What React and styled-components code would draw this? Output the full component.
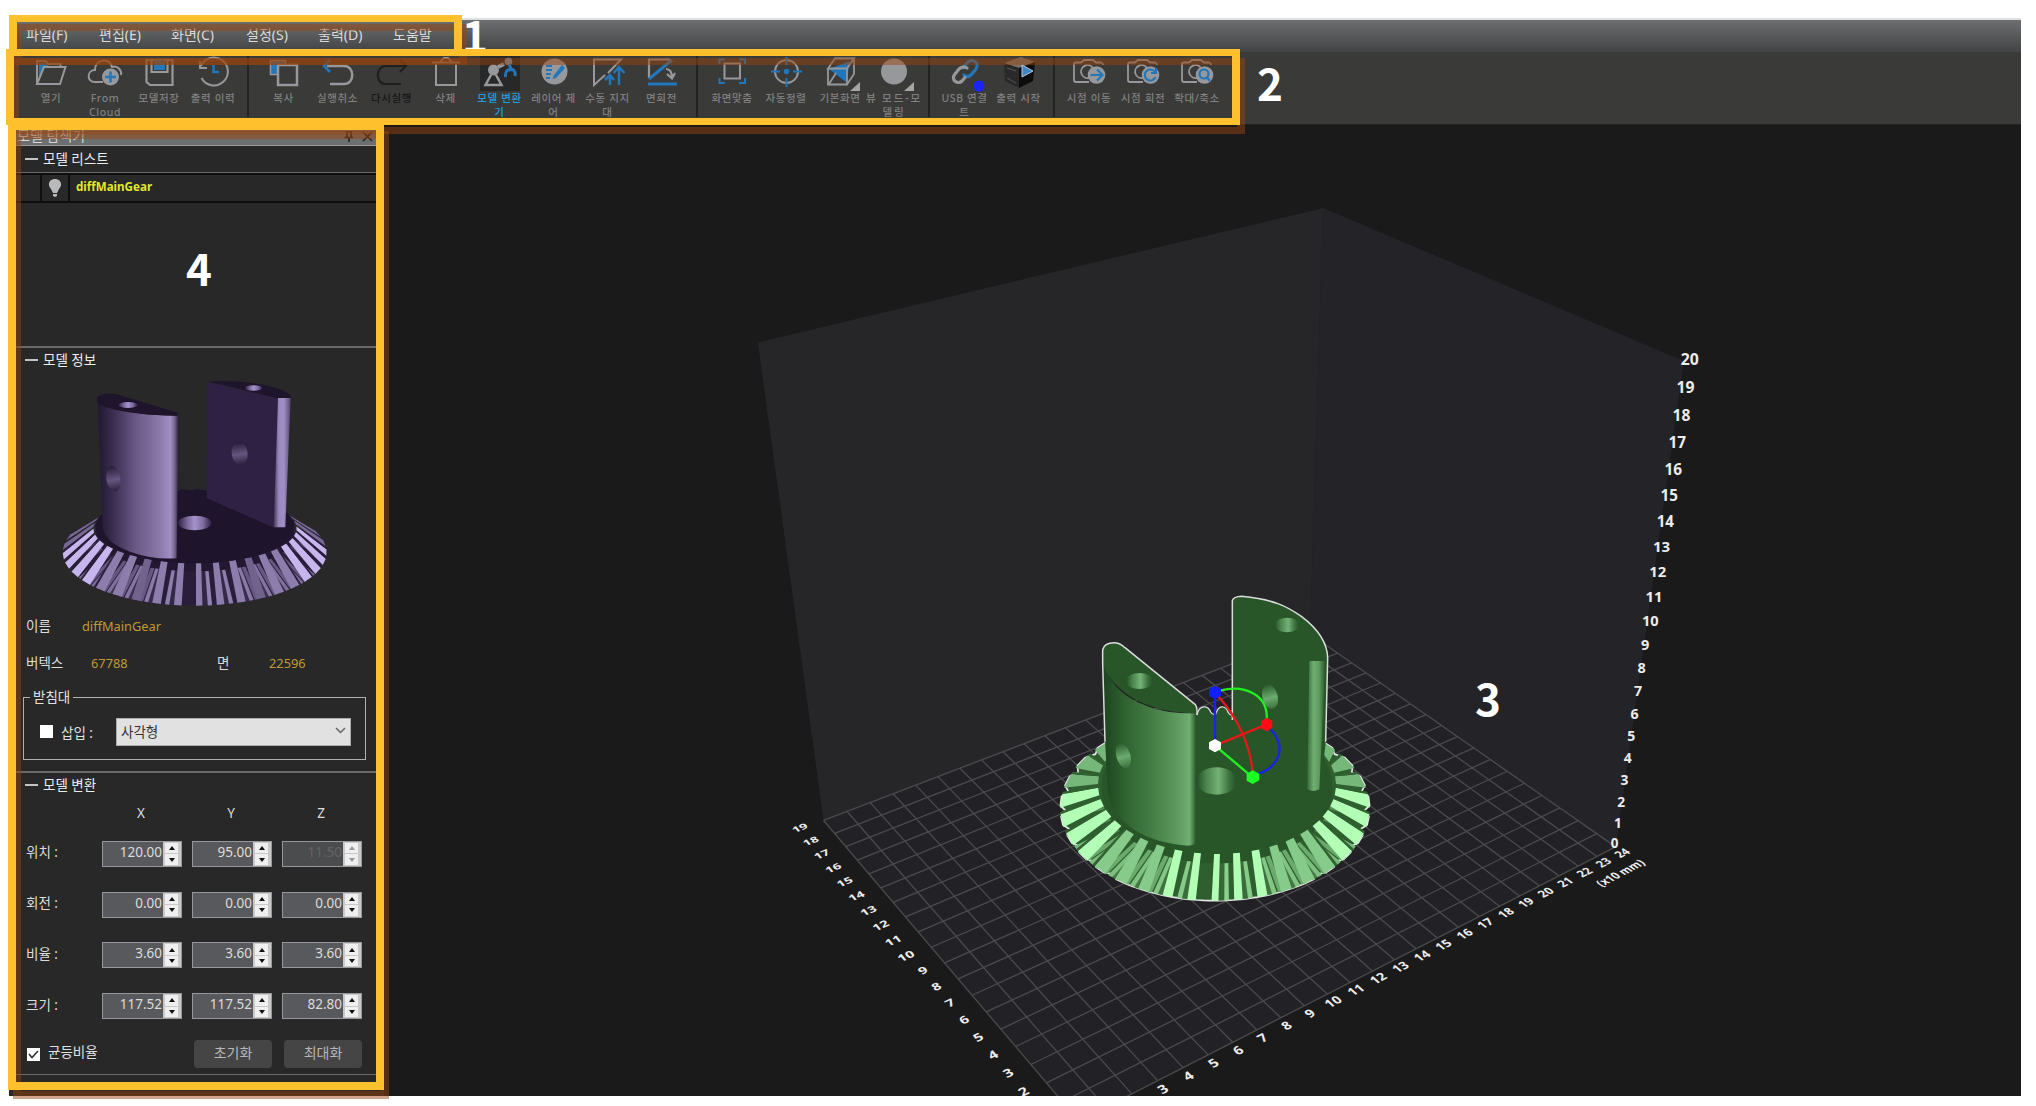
import React from "react";
import styled, { createGlobalStyle } from "styled-components";

const FONT = `"Noto Sans", "Noto Sans CJK KR", sans-serif`;
const BLUE = "#2277bb";
const GRAY = "#97989b";

const GlobalStyle = createGlobalStyle`
  *, *::before, *::after { box-sizing: border-box; }
  body { margin: 0; background: #fff; font-family: ${FONT}; }
`;

/* ---------- page shell ---------- */
const Page = styled.div`
  position: relative;
  width: 2036px;
  height: 1106px;
  padding: 18px 15px 10px 9px;
  background: #fff;
  overflow: hidden;
`;
const Window = styled.div`
  display: flex;
  flex-direction: column;
  height: 1078px;
  background: #1a1a1a;
`;
const MenuBar = styled.nav`
  display: flex;
  align-items: center;
  height: 34px;
  padding: 0 0 2px 17px;
  border-top: 2px solid #dfe0df;
  background: linear-gradient(#6c6e6f, #424344);
`;
const MenuItem = styled.span`
  width: ${(p) => p.$w}px;
  font-size: 14px;
  line-height: 16px;
  color: #dcdcdc;
  white-space: nowrap;
`;
const Toolbar = styled.div`
  display: flex;
  height: 73px;
  padding: 4px 0 0 15px;
  border-bottom: 1px solid #222;
  background: #3a3a39;
`;
const Separator = styled.div`
  width: 16.5px;
  flex: none;
  display: flex;
  justify-content: center;
  &::before {
    content: "";
    width: 2px;
    height: 61px;
    background: #232323;
  }
`;
const Tool = styled.div`
  width: 54px;
  flex: none;
  display: flex;
  flex-direction: column;
  align-items: center;
`;
const ToolIcon = styled.svg`
  width: 40px;
  height: 35px;
  overflow: visible;
  background: ${(p) => (p.$active ? "#282828" : "none")};
`;
const ToolLabel = styled.div`
  width: 66px;
  margin-top: 1px;
  font-size: 10.5px;
  font-weight: 500;
  line-height: 13.6px;
  letter-spacing: ${(p) => p.$spacing ?? 0.6}px;
  text-align: center;
  white-space: pre;
  color: ${(p) => p.$color || "#808080"};
`;

/* ---------- sidebar ---------- */
const Body = styled.div`
  display: flex;
  flex: 1;
  min-height: 0;
`;
const Sidebar = styled.aside`
  width: 375px;
  flex: none;
  display: flex;
  flex-direction: column;
  padding: 0 8px 0 7px;
  background: #282828;
`;
const PanelTitle = styled.div`
  display: flex;
  align-items: center;
  height: 21px;
  padding: 1px 1px 0 1px;
  border-bottom: 1px solid #999;
  background: #6d6e6f;
  font-size: 14px;
  line-height: 18px;
  color: #d4d4d4;
  span { flex: 1; }
`;
const Section = styled.section`
  height: ${(p) => p.$h}px;
  border-bottom: ${(p) => p.$line || 2}px solid #6a6a6a;
`;
const SectionTitle = styled.h2`
  display: flex;
  align-items: center;
  gap: 5px;
  height: ${(p) => p.$h}px;
  margin: 0;
  padding: 0 0 ${(p) => p.$lift}px 9px;
  font-size: 13.5px;
  font-weight: 400;
  color: #ececec;
  &::before {
    content: "";
    width: 13px;
    height: 2px;
    margin-top: 2px;
    background: #c4c4c4;
  }
`;
const ListRow = styled.div`
  display: grid;
  grid-template-columns: 24px 26px 1fr;
  gap: 2px;
  height: 31px;
  padding: 2px 0;
  border-top: 1px solid #6a6a6a;
  background: #0e0e0e;
`;
const ListCell = styled.div`
  display: flex;
  align-items: center;
  justify-content: ${(p) => (p.$name ? "flex-start" : "center")};
  padding: ${(p) => (p.$name ? "0 0 3px 6px" : 0)};
  background: #282828;
  color: #e2e62a;
  font-size: 11.6px;
  font-weight: 700;
`;
const Preview = styled.svg`
  display: block;
  width: 360px;
  height: 234px;
  margin-bottom: -1px;
`;
const InfoRow = styled.div`
  display: flex;
  align-items: center;
  height: 37px;
  padding-left: 10px;
  font-size: 13.5px;
  color: #ddd;
`;
const InfoLabel = styled.span`
  width: ${(p) => p.$w}px;
`;
const InfoValue = styled.span`
  width: ${(p) => p.$w}px;
  padding-top: 2px;
  color: #c09a35;
  font-size: 12.8px;
`;
const Group = styled.fieldset`
  display: flex;
  align-items: center;
  width: 343px;
  height: 73px;
  margin: 7px 0 0 7px;
  padding: 0 0 3px 16px;
  border: 1.5px solid #b0b0b0;
  font-size: 13.5px;
  color: #e0e0e0;
  legend {
    margin-left: -10px;
    padding: 0 3px;
    line-height: 20px;
  }
`;
const CheckBox = styled.span`
  display: flex;
  align-items: center;
  justify-content: center;
  width: 13px;
  height: 13px;
  margin-right: 8px;
  background: #fff;
`;
const Select = styled.div`
  display: flex;
  align-items: center;
  justify-content: space-between;
  width: 235px;
  height: 28px;
  margin-left: 23px;
  padding: 0 4px 2px 4px;
  border: 1px solid #acacac;
  background: #e1e1e1;
  color: #333;
`;
const AxisGrid = styled.div`
  display: grid;
  grid-template-columns: 66px 80px 80px 80px;
  column-gap: 10px;
  padding-left: 10px;
  row-gap: 24.8px;
  align-items: center;
  color: #ddd;
  font-size: 13.5px;
`;
const AxisHead = styled.div`
  height: 19px;
  margin: 0 1px -7px -1px;
  line-height: 19px;
  text-align: center;
`;
const RowLabel = styled.div`
  padding-bottom: 5px;
  white-space: nowrap;
`;
const Spin = styled.div`
  display: flex;
  height: 26px;
  border: 1px solid #96989c;
  background: ${(p) => (p.$off ? "#4b4c4e" : "#58595c")};
`;
const SpinValue = styled.span`
  flex: 1;
  text-align: right;
  line-height: 21px;
  padding-right: 1px;
  color: ${(p) => (p.$off ? "#626365" : "#dcdcdc")};
`;
const SpinButtons = styled.span`
  display: flex;
  flex-direction: column;
  gap: 1px;
  width: 18px;
  padding: 1px 3px 1px 2px;
  background: #c9c9c9;
`;
const SpinButton = styled.span`
  flex: 1;
  display: flex;
  align-items: center;
  justify-content: center;
  background: #efefef;
`;
const Footer = styled.div`
  display: flex;
  align-items: center;
  height: 28px;
  margin-top: 21px;
  padding-left: 11px;
  color: #e0e0e0;
  font-size: 13.5px;
`;
const FooterText = styled.span`
  width: 146px;
  padding-bottom: 7px;
`;
const Button = styled.div`
  width: 78px;
  height: 28px;
  margin-right: 12px;
  border-radius: 4px;
  background: #454545;
  color: #b8b8b8;
  font-size: 14px;
  line-height: 25px;
  text-align: center;
`;

/* ---------- annotations ---------- */
const Frame = styled.div`
  position: absolute;
  left: ${(p) => p.$x}px;
  top: ${(p) => p.$y}px;
  width: ${(p) => p.$w}px;
  height: ${(p) => p.$h}px;
  &::before,
  &::after {
    content: "";
    position: absolute;
    inset: 0;
    border-style: solid;
    border-width: ${(p) => p.$edge || 7}px 8px;
  }
  &::before {
    inset: 9px -5px -9px 5px;
    border-color: rgba(155, 68, 13, 0.48);
  }
  &::after {
    border-color: #ffc02e;
  }
`;
const Marker = styled.div`
  position: absolute;
  left: ${(p) => p.$x}px;
  top: ${(p) => p.$y}px;
  font-family: "Noto Sans CJK KR", sans-serif;
  font-size: 44px;
  font-weight: 700;
  line-height: 44px;
  color: #fff;
`;
const Viewport = styled.svg`
  flex: 1;
  min-width: 0;
  height: 971px;
  display: block;
  background: #1a1a1a;
`;

/* ---------- camera ---------- */
function solveLinear(a, b) {
  const n = b.length;
  const m = a.map((row, i) => [...row, b[i]]);
  for (let c = 0; c < n; c++) {
    let p = c;
    for (let r = c + 1; r < n; r++) if (Math.abs(m[r][c]) > Math.abs(m[p][c])) p = r;
    [m[c], m[p]] = [m[p], m[c]];
    for (let r = 0; r < n; r++) {
      if (r === c) continue;
      const f = m[r][c] / m[c][c];
      for (let k = c; k <= n; k++) m[r][k] -= f * m[c][k];
    }
  }
  return m.map((row, i) => row[n] / row[i]);
}

// Build volume in cm, and where each of its corners lands on screen.
const WIDTH = 24;
const DEPTH = 19;
const HEIGHT = 20;
const CORNERS = [
  [0, 0, 0, 1078.2, 1120.7],
  [WIDTH, 0, 0, 1616.6, 846.7],
  [WIDTH, DEPTH, 0, 1309.2, 633.8],
  [0, DEPTH, 0, 824.3, 821],
  [0, DEPTH, HEIGHT, 757.6, 342],
  [WIDTH, DEPTH, HEIGHT, 1323.7, 208],
  [WIDTH, 0, HEIGHT, 1683.3, 361.4],
];

function makeCamera(corners) {
  const rows = [];
  const rhs = [];
  corners.forEach(([X, Y, Z, U, V]) => {
    const [x, y, z, u, v] = [X / 24, Y / 24, Z / 24, U / 1000, V / 1000];
    rows.push([x, y, z, 1, 0, 0, 0, 0, -u * x, -u * y, -u * z]);
    rhs.push(u);
    rows.push([0, 0, 0, 0, x, y, z, 1, -v * x, -v * y, -v * z]);
    rhs.push(v);
  });
  const n = 11;
  const ata = Array.from({ length: n }, (_, i) =>
    Array.from({ length: n }, (_, j) => rows.reduce((s, r) => s + r[i] * r[j], 0))
  );
  const atb = Array.from({ length: n }, (_, i) => rows.reduce((s, r, k) => s + r[i] * rhs[k], 0));
  const p = solveLinear(ata, atb);
  return (X, Y, Z = 0) => {
    const [x, y, z] = [X / 24, Y / 24, Z / 24];
    const w = p[8] * x + p[9] * y + p[10] * z + 1;
    return [
      ((p[0] * x + p[1] * y + p[2] * z + p[3]) / w) * 1000,
      ((p[4] * x + p[5] * y + p[6] * z + p[7]) / w) * 1000,
    ];
  };
}
const project = makeCamera(CORNERS);
const pts = (...list) => list.map((q) => q.map((v) => v.toFixed(2)).join(",")).join(" ");
const range = (a, b) => Array.from({ length: b - a + 1 }, (_, i) => a + i);

function FloorText({ x, y, children, size = 5.2 }) {
  const o = project(x, y);
  const ex = project(x + 0.5, y);
  const ey = project(x, y + 0.5);
  const m = [
    (ex[0] - o[0]) / 5,
    (ex[1] - o[1]) / 5,
    -(ey[0] - o[0]) / 5,
    -(ey[1] - o[1]) / 5,
    o[0],
    o[1],
  ];
  return (
    <text transform={`matrix(${m.join(" ")})`} fontSize={size} textAnchor="middle" y={size * 0.36}>
      {children}
    </text>
  );
}

/* ---------- gear ---------- */
const D = Math.PI / 180;
// Angles are measured from the point of the rim nearest to the viewer.
const onEllipse = (e, deg) => [e.x + e.a * Math.sin(deg * D), e.y + e.b * Math.cos(deg * D)];

const mix = (a, b, t) =>
  `rgb(${a.map((v, i) => Math.round(v + (b[i] - v) * Math.max(0, Math.min(1, t)))).join(",")})`;

function GearRing({ outer, inner, root, step, outerStep, bend, shift, span, c, outline }) {
  const ain = (k) => k * step + shift;
  const aout = (k) => k * outerStep + Math.sign(k) * bend * k * k + shift;
  const ks = range(-span, span).sort((p, q) => Math.abs(q) - Math.abs(p));
  const rim = [];
  for (let k = -span; k <= span; k += 0.5) {
    const tip = Number.isInteger(k);
    const e = tip || Math.abs(k) < 4 ? outer : { ...outer, a: outer.a * 0.965, b: outer.b * 0.97 };
    if (tip) rim.push(onEllipse(e, aout(k - 0.22)), onEllipse(e, aout(k + 0.22)));
    else rim.push(onEllipse(e, aout(k)));
  }
  return (
    <g>
      <polygon points={pts(...rim)} fill={mix(c.dark, c.mid, 0.12)} stroke={outline || "none"} strokeWidth="5" strokeLinejoin="round" />
      <ellipse cx={root.x} cy={root.y} rx={root.a} ry={root.b} fill={mix(c.dark, c.dark, 0)} />
      {ks.map((k) => {
        const n = Math.abs(k);
        const side = Math.min(1, n / 7);
        const s = Math.sign(k) || 1;
        const w = 0.15 + side * 0.19;
        const glow = Math.abs(n - 4) < 1.4 ? 0.45 : 1;
        const back = n > 9 ? 0.25 : 1;
        const wedge = (lo, hi, from, fill, key) => (
          <polygon
            key={key}
            fill={fill}
            points={pts(
              onEllipse(from, ain(k + lo)),
              onEllipse(from, ain(k + hi)),
              onEllipse(outer, aout(k + hi)),
              onEllipse(outer, aout(k + lo))
            )}
          />
        );
        return (
          <g key={k}>
            {n < 9 && wedge(s * 0.14, s * 0.42, root, mix(c.dark, c.mid, 0.25 + side * 0.45), "f")}
            {n < 7 && wedge(s * 0.4, s * 0.6, root, mix(c.mid, c.light, 0.5 - side * 0.3), "v")}
            {n > 2 && n < 7 && wedge(-s * 0.34, -s * 0.1, root, mix(c.mid, c.light, 0.1), "g")}
            {wedge(-w, w, inner, mix(c.mid, c.light, glow * back * (c.flat && n < 4 ? 0.45 : 1)), "c")}
            {n > 4 && wedge(s * w, s * (w + 0.12), inner, mix(c.dark, c.mid, 0.15), "d")}
          </g>
        );
      })}
    </g>
  );
}

function Shade({ id, stops, vertical }) {
  return (
    <linearGradient id={id} x2={vertical ? 0 : 1} y2={vertical ? 1 : 0}>
      {stops.map(([o, col]) => (
        <stop key={o} offset={o} stopColor={col} />
      ))}
    </linearGradient>
  );
}

function GreenGear() {
  const base = "#285628";
  return (
    <g transform="translate(1040 580) scale(0.33333)">
      <defs>
        <Shade id="gFace" stops={[[0, "#1d441e"], [0.2, "#2c5f2d"], [0.6, "#4a854a"], [0.85, "#65a166"], [0.93, "#70ae71"], [0.98, "#3d733e"], [1, "#24502a"]]} />
        <Shade id="gHole" stops={[[0, "#24502a"], [0.25, "#4c874d"], [0.55, "#74b276"], [0.8, "#3f7540"], [1, "#24502a"]]} />
        <Shade id="gCol" stops={[[0, "#386c39"], [0.35, "#70ad71"], [0.65, "#5f9c60"], [1, "#285628"]]} />
        <Shade id="gSide" vertical stops={[[0, "#2b5c2c"], [0.55, "#6cab6e"], [1, "#3c713d"]]} />
      </defs>
      <GearRing
        outer={{ x: 525, y: 684, a: 464, b: 278 }}
        inner={{ x: 531, y: 615, a: 357, b: 207 }}
        root={{ x: 531, y: 640, a: 345, b: 210 }}
        step={9.4}
        outerStep={8.5}
        bend={0.22}
        shift={0}
        span={12}
        outline="#e8e8e8"
        c={{ dark: [40, 86, 40], mid: [98, 160, 100], light: [178, 255, 182] }}
      />
      <ellipse cx="531" cy="612" rx="345" ry="204" fill={base} />
      <path d="M470 600 V405 C476 372 506 372 514 398 L527 402 C536 370 556 372 565 404 L577 400 V600Z" fill={base} />
      <path d="M471 405 C477 374 504 374 512 396 Q518 406 527 402 C536 374 556 374 565 398 Q571 408 576 402" fill="none" stroke="#d8d8d8" strokeWidth="4" />
      <path d="M577 62 Q580 50 605 49 C700 58 740 78 785 110 Q862 168 863 235 L857 490 L840 632 H802 L577 520Z" fill={base} />
      <path d="M577 420 V62 Q580 50 605 49 C700 58 740 78 785 110 Q862 168 863 235 L857 485" fill="none" stroke="#dcdcdc" strokeWidth="4.5" />
      <path d="M808 243 H856 L838 628 Q820 638 802 628Z" fill="url(#gCol)" />
      <ellipse cx="741" cy="135" rx="37" ry="22" fill="url(#gHole)" />
      <ellipse cx="690" cy="350" rx="23" ry="37" transform="rotate(-14 690 350)" fill="url(#gSide)" />
      <ellipse cx="530" cy="603" rx="60" ry="41" fill="url(#gHole)" />
      <path d="M190 250 Q215 330 290 365 Q360 398 430 400 H468 V790 Q455 800 430 796 Q330 785 270 740 Q205 690 203 620 L195 480Z" fill="url(#gFace)" />
      <path d="M188 250 V210 Q192 188 222 188 Q240 188 255 203 L466 374 Q472 382 467 399 H440 Q340 392 272 350 Q205 305 188 250Z" fill={base} />
      <path d="M195 485 L188 250 V210 Q192 188 222 188 Q240 188 255 203 L466 374 Q472 380 471 405" fill="none" stroke="#dcdcdc" strokeWidth="4.5" />
      <ellipse cx="298" cy="303" rx="40" ry="24" fill="url(#gHole)" />
      <ellipse cx="250" cy="527" rx="21" ry="38" transform="rotate(-16 250 527)" fill="url(#gSide)" />
      <g fill="none" strokeWidth="7">
        <path d="M540 332 C615 312 686 345 680 420" stroke="#22ee22" />
        <path d="M536 350 C595 415 632 500 638 580" stroke="#e81818" />
        <path d="M692 448 C740 500 720 560 652 582" stroke="#1822e8" />
        <path d="M525 345 V490" stroke="#1822ff" />
        <path d="M525 497 L680 433" stroke="#e81818" />
        <path d="M525 497 L638 592" stroke="#22ee22" />
      </g>
      <polygon points="525,317 543,327 543,347 525,357 507,347 507,327" fill="#0f1fff" />
      <polygon points="525,477 543,487 543,507 525,517 507,507 507,487" fill="#fff" />
      <polygon points="680,413 697,423 697,443 680,454 663,445 663,424" fill="#ff0d17" />
      <polygon points="638,571 658,581 658,601 638,612 620,602 620,581" fill="#1cff24" />
    </g>
  );
}

function PurpleGear() {
  const base = "#1e142b";
  return (
    <g transform="translate(0 340) scale(0.33333)">
      <defs>
        <Shade id="pFace" stops={[[0, "#21172f"], [0.2, "#3b2f52"], [0.45, "#665583"], [0.75, "#8a77a8"], [0.9, "#a08dc4"], [0.95, "#76648f"], [1, "#2a1f3a"]]} />
        <Shade id="pHole" stops={[[0, "#2b2140"], [0.3, "#7f6da0"], [0.5, "#a492cb"], [0.75, "#7f6da0"], [1, "#2b2140"]]} />
        <Shade id="pCol" stops={[[0, "#413358"], [0.3, "#9a88bd"], [0.6, "#a08ec6"], [1, "#54456d"]]} />
        <Shade id="pSide" vertical stops={[[0, "#281d38"], [0.55, "#66557f"], [1, "#2d2140"]]} />
      </defs>
      <GearRing
        outer={{ x: 584, y: 637, a: 396, b: 160 }}
        inner={{ x: 585, y: 565, a: 305, b: 104 }}
        root={{ x: 585, y: 588, a: 298, b: 106 }}
        step={9.8}
        outerStep={9.3}
        bend={0.05}
        shift={2}
        span={11}
        c={{ dark: [34, 24, 50], mid: [92, 78, 118], light: [199, 182, 238], flat: true }}
      />
      <ellipse cx="585" cy="560" rx="298" ry="110" fill={base} />
      <path d="M536 520 V452 Q552 440 570 456 Q596 436 612 460 L622 470 V520Z" fill={base} />
      <path d="M622 126 L834 175 L822 563 L620 475Z" fill="#2e2144" />
      <path d="M622 124 Q760 118 845 150 Q878 162 873 175 H834Z" fill={base} />
      <path d="M834 174 H872 L856 562 H821Z" fill="url(#pCol)" />
      <ellipse cx="761" cy="144" rx="26" ry="8" fill="url(#pHole)" />
      <ellipse cx="719" cy="340" rx="24" ry="34" transform="rotate(-8 719 340)" fill="url(#pSide)" />
      <ellipse cx="584" cy="549" rx="50" ry="22" fill="url(#pHole)" />
      <path d="M293 180 Q320 205 410 219 Q460 227 536 227 L530 655 Q460 660 390 635 Q312 605 308 560Z" fill="url(#pFace)" />
      <path d="M292 185 L291 172 Q310 155 350 163 L534 218 V227 Q400 226 330 205 Q300 197 292 185Z" fill={base} />
      <ellipse cx="384" cy="195" rx="29" ry="9" fill="url(#pHole)" />
      <ellipse cx="340" cy="416" rx="21" ry="38" transform="rotate(-10 340 416)" fill="url(#pSide)" />
    </g>
  );
}

function Scene() {
  const lerp = (a, b, t) => a + (b - a) * t;
  return (
    <Viewport viewBox="384 125 1637 971" preserveAspectRatio="none">
      <polygon points={pts(project(0, DEPTH), project(WIDTH, DEPTH), project(WIDTH, DEPTH, HEIGHT), project(0, DEPTH, HEIGHT))} fill="#262628" />
      <polygon points={pts(project(WIDTH, 0), project(WIDTH, DEPTH), project(WIDTH, DEPTH, HEIGHT), project(WIDTH, 0, HEIGHT))} fill="#242328" />
      <polygon points={pts(project(0, 0), project(WIDTH, 0), project(WIDTH, DEPTH), project(0, DEPTH))} fill="#222126" />
      <g stroke="#4b4b4d" strokeWidth="1.3">
        {range(0, WIDTH).map((i) => {
          const [a, b] = [project(i, 0), project(i, DEPTH)];
          return <line key={i} x1={a[0]} y1={a[1]} x2={b[0]} y2={b[1]} />;
        })}
        {range(0, DEPTH).map((i) => {
          const [a, b] = [project(0, i), project(WIDTH, i)];
          return <line key={i} x1={a[0]} y1={a[1]} x2={b[0]} y2={b[1]} />;
        })}
      </g>
      <g fill="#ececec" fontFamily='"Open Sans", sans-serif' fontWeight="700">
        {range(0, HEIGHT).map((z) => {
          const [x, y] = project(WIDTH, 0, z);
          return (
            <text
              key={z}
              x={x + lerp(-0.5, 5, z / 20) + (z > 9 ? 1 : -0.5)}
              y={y + lerp(1.5, 4, z / 20)}
              fontSize={lerp(13.5, 15.8, z / 20)}
              textAnchor="middle"
            >
              {z}
            </text>
          );
        })}
        {range(3, WIDTH).map((x) => (
          <FloorText key={x} x={x - 0.07} y={-0.4}>{x}</FloorText>
        ))}
        {range(2, DEPTH).map((y) => (
          <FloorText key={y} x={y > 9 ? -0.95 : -0.8} y={y + 0.1}>{y}</FloorText>
        ))}
        <FloorText x={23} y={-1.2} size={5.1}>(x10 mm)</FloorText>
      </g>
      <GreenGear />
    </Viewport>
  );
}

/* ---------- toolbar icons, drawn on a 40 × 35 box ---------- */
const Corner = () => <path d="M40 26 V35 H30Z" fill="#a5a5a5" stroke="none" />;
const Camera = ({ children }) => (
  <g fill="none" stroke={GRAY} strokeWidth="1.8">
    <path d="M5 8 Q5 6.5 7 6.5 H12 L15 4 H24 L27 6.5 H32 Q34 7 34 9 M5 8 V24 Q5 26 7 26 H20" />
    <path d="M20 22 A6.5 6.5 0 1 1 24 12" />
    <circle cx="27.5" cy="19" r="8.8" fill={GRAY} stroke="none" />
    <g stroke={BLUE} strokeWidth="2.2">{children}</g>
  </g>
);

const ICONS = {
  open: (
    <g fill="none" stroke={GRAY} strokeWidth="2">
      <path d="M8 7 H15 L18 10 H29 V11 H13 L8 21Z" fill={BLUE} stroke="none" />
      <path d="M6 28 V5 H14.5 L17.5 8 H29.5 V11 M13 11 H34.5 L29 28 H6Z" />
    </g>
  ),
  cloud: (
    <g>
      <path d="M18 26 H10 C1 26 2 14 10 14 C10 3 25 1 27 11 C33 9 37 15 36 19" fill="none" stroke={GRAY} strokeWidth="2" />
      <circle cx="25.5" cy="21" r="8.5" fill={GRAY} />
      <path d="M20 21 H31 M25.5 15.5 V26.5" stroke={BLUE} strokeWidth="2.5" />
    </g>
  ),
  save: (
    <g fill="none" stroke={GRAY} strokeWidth="2.2">
      <path d="M7.5 4 H33.5 V29 H11 L7.5 26Z" />
      <path d="M12.5 3 V16 H28.5 V3" />
      <rect x="15" y="4" width="11" height="10" fill={BLUE} stroke="none" />
    </g>
  ),
  history: (
    <g fill="none" strokeWidth="2">
      <path d="M8 10 A14 14 0 1 1 8.5 22" stroke={GRAY} />
      <path d="M7 5 V12 H14" stroke={GRAY} />
      <path d="M20.5 9 V16 H26" stroke={BLUE} strokeWidth="2.5" />
    </g>
  ),
  copy: (
    <g>
      <rect x="6.5" y="4.5" width="15" height="14" fill={BLUE} stroke={GRAY} strokeWidth="1.5" />
      <rect x="14" y="9" width="19" height="20" fill="#3a3a39" stroke={GRAY} strokeWidth="2.5" />
    </g>
  ),
  undo: (
    <g fill="none" strokeWidth="2.5">
      <path d="M9 10 H26 C37 10 37 28 26 28 H12" stroke={GRAY} />
      <path d="M12 4 L6 10 L12 16" stroke={BLUE} />
    </g>
  ),
  redo: (
    <g fill="none" stroke="#1f1f1f" strokeWidth="2.2">
      <path d="M32 10 H14 C3 10 3 28 14 28 H29" />
      <path d="M28 4 L34 10 L28 16" />
    </g>
  ),
  trash: (
    <g fill="none" stroke={GRAY} strokeWidth="2">
      <path d="M10 8 V29 H30 V8 M6 6.5 H34 M14 6 L18 2 H22 L26 6" />
    </g>
  ),
  transform: (
    <g>
      <circle cx="13.5" cy="14" r="5.5" fill={GRAY} />
      <path d="M11 19 L5.500 29 H21.5 L16 19" fill="none" stroke={GRAY} strokeWidth="2.5" />
      <path d="M18 11 L24 8" stroke={GRAY} strokeWidth="4" />
      <circle cx="28.5" cy="5.5" r="3.8" fill="#7393ab" />
      <path d="M29 8 L31 13 M25.5 21 C25 15 28 13 30 14 C33 12 36 16 35 20" fill="none" stroke={BLUE} strokeWidth="3" />
    </g>
  ),
  layer: (
    <g>
      <circle cx="20.5" cy="15.5" r="13" fill={GRAY} />
      <path d="M12 10 H18 M12 14 H18 M12 18 H17 M12 22 H16" stroke={BLUE} strokeWidth="2" />
      <path d="M28 9 L31 12 L22 22 L18.5 23 L20 19Z" fill={BLUE} />
    </g>
  ),
  support: (
    <g fill="none" strokeWidth="2">
      <path d="M20 17 L33 3.5 H6 V29 L17 19" stroke={GRAY} />
      <path d="M22 29 V20 M17 24 L22 19 L26 24 M31 29 V12 M25.5 17 L31 11 L36.5 17" stroke={BLUE} strokeWidth="2.5" />
    </g>
  ),
  face: (
    <g fill="none" strokeWidth="2.2">
      <path d="M28 3.5 H7 V22" stroke={GRAY} />
      <path d="M7 23 L30 4 M6 28 H35" stroke={BLUE} strokeWidth="3" />
      <path d="M24 13 Q30 13 30 22 M25 18 L30 22.5 L33 17" stroke={GRAY} />
    </g>
  ),
  fit: (
    <g fill="none" strokeWidth="2">
      <rect x="12.5" y="7.5" width="15.5" height="15" stroke={GRAY} />
      <path d="M7.5 8 V3.5 H13 M27 3.5 H33 V8 M33 22 V27 H27 M13 27 H7.5 V22" stroke={BLUE} />
    </g>
  ),
  align: (
    <g fill="none" strokeWidth="2">
      <circle cx="20.5" cy="15.5" r="11.5" stroke={GRAY} />
      <circle cx="20.5" cy="15.5" r="2.8" fill={BLUE} />
      <path d="M5 15.5 H14 M27 15.5 H36 M20.5 1 V9 M20.5 22 V31" stroke={BLUE} />
    </g>
  ),
  cube: (
    <g fill="none" stroke={GRAY} strokeWidth="1.8">
      <path d="M9 13 L30 5 L26 26Z" fill={BLUE} stroke="none" />
      <path d="M8 12.5 L15 2.5 H34 L27 12.5Z M8 12.5 V28.5 H27 V12.5 M27 28.5 L34 18 V2.5 M9 28 L16 17" />
      <Corner />
    </g>
  ),
  sphere: (
    <g>
      <circle cx="20" cy="15.5" r="13" fill={GRAY} />
      <Corner />
    </g>
  ),
  link: (
    <g fill="none" strokeWidth="3.2" strokeLinecap="round">
      <path d="M18 12 L22 7 C27 1 35 7 31 13 L27 18 C24 21 21 21 19 19" stroke={BLUE} />
      <path d="M22 12 C19 10 16 11 14 13 L10 18 C5 24 13 29 17 25 L20 21.5" stroke={GRAY} />
      <circle cx="34" cy="30" r="5.5" fill="#1a24ff" stroke="none" />
    </g>
  ),
  print: (
    <g>
      <path d="M5 7 L22 1 L36 6 L20 12Z" fill="#77716d" />
      <path d="M5 7 L20 12 V32 L6 25Z" fill="#292929" />
      <path d="M20 12 L36 6 L34 25 L20 32Z" fill="#0c0c0c" />
      <path d="M8 12 L17 15 M8 22 L17 27" stroke="#555" />
      <path d="M23 9 L34 15 L23 21Z" fill="#3f86c4" stroke="#b5cbe0" />
    </g>
  ),
  camMove: <Camera><path d="M21.5 19 H33 M28 13.5 L33.5 19 L28 24.5" /></Camera>,
  camTurn: <Camera><path d="M32 16 A5.5 5.5 0 1 0 32.5 21 M33 12 V17 H28" /></Camera>,
  camZoom: <Camera><circle cx="27" cy="18" r="4.5" /><path d="M30 21.5 L33 25" /></Camera>,
};

const TOOL_GROUPS = [
  [["open", "열기"], ["cloud", "From\nCloud"], ["save", "모델저장"], ["history", "출력 이력"]],
  [
    ["copy", "복사"],
    ["undo", "실행취소"],
    ["redo", "다시실행", "#161616"],
    ["trash", "삭제"],
    ["transform", "모델 변환\n기", "#1e9fe0"],
    ["layer", "레이어 제\n어"],
    ["support", "수동 지지\n대"],
    ["face", "면회전"],
  ],
  [["fit", "화면맞춤"], ["align", "자동정렬"], ["cube", "기본화면"], ["sphere", "뷰 모드-모\n델링", undefined, 1.9]],
  [["link", "USB 연결\n트"], ["print", "출력 시작"]],
  [["camMove", "시점 이동"], ["camTurn", "시점 회전"], ["camZoom", "확대/축소"]],
];

const MENU = [["파일(F)", 73], ["편집(E)", 72], ["화면(C)", 75], ["설정(S)", 72], ["출력(D)", 75], ["도움말", 60]];

const ROWS = [
  ["위치 :", ["120.00", "95.00", "11.50"], 2],
  ["회전 :", ["0.00", "0.00", "0.00"]],
  ["비율 :", ["3.60", "3.60", "3.60"]],
  ["크기 :", ["117.52", "117.52", "82.80"]],
];

function SpinBox({ value, off }) {
  const color = off ? "#999" : "#111";
  return (
    <Spin $off={off}>
      <SpinValue $off={off}>{value}</SpinValue>
      <SpinButtons>
        <SpinButton><svg width="6" height="4"><path d="M0 4 L3 0 L6 4Z" fill={color} /></svg></SpinButton>
        <SpinButton><svg width="6" height="4"><path d="M0 0 L3 4 L6 0Z" fill={color} /></svg></SpinButton>
      </SpinButtons>
    </Spin>
  );
}

function ModelPanel() {
  return (
    <Sidebar>
      <PanelTitle>
        <span>모델 탐색기</span>
        <svg width="34" height="14" fill="none" stroke="#222" strokeWidth="1.6">
          <path d="M5 3 H11 M6 3 V8 M10 3 V8 M3.5 8.5 H12 M8 9 V13 M22 3 L31 12 M31 3 L22 12" />
        </svg>
      </PanelTitle>
      <Section $h={202}>
        <SectionTitle $h={26} $lift={2}>모델 리스트</SectionTitle>
        <ListRow>
          <ListCell />
          <ListCell>
            <svg width="14" height="20">
              <path d="M7 1 C1 1 -1 7 3 11 L5 15 H9 L11 11 C15 7 13 1 7 1Z M5 16 H9 V18 L7 19 L5 18Z" fill="#b9babc" />
            </svg>
          </ListCell>
          <ListCell $name>diffMainGear</ListCell>
        </ListRow>
      </Section>
      <Section $h={425}>
        <SectionTitle $h={25} $lift={3}>모델 정보</SectionTitle>
        <Preview viewBox="16 373 360 234">
          <PurpleGear />
        </Preview>
        <InfoRow>
          <InfoLabel $w={56}>이름</InfoLabel>
          <InfoValue $w={200}>diffMainGear</InfoValue>
        </InfoRow>
        <InfoRow>
          <InfoLabel $w={65}>버텍스</InfoLabel>
          <InfoValue $w={126}>67788</InfoValue>
          <InfoLabel $w={52}>면</InfoLabel>
          <InfoValue $w={60}>22596</InfoValue>
        </InfoRow>
        <Group>
          <legend>받침대</legend>
          <CheckBox />
          삽입 :
          <Select>
            사각형
            <svg width="11" height="7" fill="none" stroke="#666" strokeWidth="1.5"><path d="M1 1 L5.5 5.5 L10 1" /></svg>
          </Select>
        </Group>
      </Section>
      <Section $h={302} $line={1}>
        <SectionTitle $h={31} $lift={9}>모델 변환</SectionTitle>
        <AxisGrid>
          <div />
          {["X", "Y", "Z"].map((a) => <AxisHead key={a}>{a}</AxisHead>)}
          {ROWS.map(([label, values, off]) => (
            <React.Fragment key={label}>
              <RowLabel>{label}</RowLabel>
              {values.map((v, i) => <SpinBox key={i} value={v} off={i === off} />)}
            </React.Fragment>
          ))}
        </AxisGrid>
        <Footer>
          <CheckBox>
            <svg width="11" height="9" fill="none" stroke="#333" strokeWidth="1.6"><path d="M1 4 L4 7.5 L10 1" /></svg>
          </CheckBox>
          <FooterText>균등비율</FooterText>
          <Button>초기화</Button>
          <Button>최대화</Button>
        </Footer>
      </Section>
    </Sidebar>
  );
}

export default function App() {
  return (
    <Page>
      <GlobalStyle />
      <Window>
        <MenuBar>
          {MENU.map(([t, w]) => <MenuItem key={t} $w={w}>{t}</MenuItem>)}
        </MenuBar>
        <Toolbar>
          {TOOL_GROUPS.map((group, g) => (
            <React.Fragment key={g}>
              {g > 0 && <Separator />}
              {group.map(([icon, label, color, spacing]) => (
                <Tool key={icon}>
                  <ToolIcon viewBox="0 0 40 35" $active={icon === "transform"}>{ICONS[icon]}</ToolIcon>
                  <ToolLabel $color={color} $spacing={spacing}>{label}</ToolLabel>
                </Tool>
              ))}
            </React.Fragment>
          ))}
        </Toolbar>
        <Body>
          <ModelPanel />
          <Scene />
        </Body>
      </Window>
      <Frame $x={9} $y={15} $w={453} $h={41} />
      <Marker $x={462} $y={12}>1</Marker>
      <Frame $x={6} $y={49} $w={1234} $h={76} />
      <Frame $x={8} $y={122} $w={376} $h={968} $edge={8} />
      <Marker $x={1257} $y={60}>2</Marker>
      <Marker $x={1475} $y={675}>3</Marker>
      <Marker $x={186} $y={245}>4</Marker>
    </Page>
  );
}
